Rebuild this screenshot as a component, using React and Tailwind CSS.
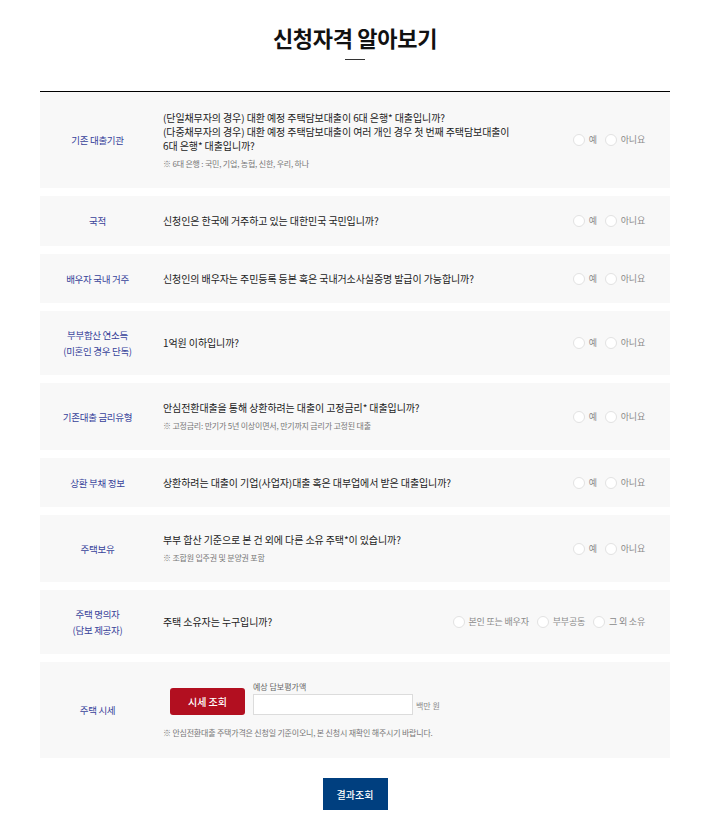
import { useState } from "react";

const FONT = { fontFamily: '"Noto Sans CJK KR", "Noto Sans", sans-serif' };

const ROWS = [
  {
    label: ["기존 대출기관"],
    lines: [
      "(단일채무자의 경우) 대환 예정 주택담보대출이 6대 은행* 대출입니까?",
      "(다중채무자의 경우) 대환 예정 주택담보대출이 여러 개인 경우 첫 번째 주택담보대출이",
      "6대 은행* 대출입니까?",
    ],
    note: "※ 6대 은행 : 국민, 기업, 농협, 신한, 우리, 하나",
    h: "h-[96px]",
  },
  { label: ["국적"], lines: ["신청인은 한국에 거주하고 있는 대한민국 국민입니까?"], h: "h-[50px]" },
  {
    label: ["배우자 국내 거주"],
    lines: ["신청인의 배우자는 주민등록 등본 혹은 국내거소사실증명 발급이 가능합니까?"],
    h: "h-[49px]",
  },
  { label: ["부부합산 연소득", "(미혼인 경우 단독)"], lines: ["1억원 이하입니까?"], h: "h-[64px]" },
  {
    label: ["기존대출 금리유형"],
    lines: ["안심전환대출을 통해 상환하려는 대출이 고정금리* 대출입니까?"],
    note: "※ 고정금리: 만기가 5년 이상이면서, 만기까지 금리가 고정된 대출",
    h: "h-[67px]",
  },
  {
    label: ["상환 부채 정보"],
    lines: ["상환하려는 대출이 기업(사업자)대출 혹은 대부업에서 받은 대출입니까?"],
    h: "h-[49px]",
  },
  {
    label: ["주택보유"],
    lines: ["부부 합산 기준으로 본 건 외에 다른 소유 주택*이 있습니까?"],
    note: "※ 조합원 입주권 및 분양권 포함",
    h: "h-[67px]",
  },
  {
    label: ["주택 명의자", "(담보 제공자)"],
    lines: ["주택 소유자는 누구입니까?"],
    options: ["본인 또는 배우자", "부부공동", "그 외 소유"],
    h: "h-[64px]",
  },
];

function Radio({ options, value, onChange }) {
  return (
    <div className="flex items-center gap-[8px] pr-[25px] shrink-0">
      {options.map((opt) => (
        <label key={opt} className="flex items-center gap-[4px] cursor-pointer">
          <span
            onClick={() => onChange(opt)}
            className="w-[12px] h-[12px] rounded-full border border-[#e2e2e2] bg-white flex items-center justify-center"
          >
            {value === opt && <span className="w-[5px] h-[5px] rounded-full bg-[#003f7f]" />}
          </span>
          <span className="text-[9px] text-[#8a8a8a] leading-[14px] tracking-[-0.2px]">{opt}</span>
        </label>
      ))}
    </div>
  );
}

export default function App() {
  const [answers, setAnswers] = useState({});
  const [price, setPrice] = useState("");

  return (
    <div className="min-h-screen bg-white text-[#222]" style={FONT}>
      <div className="w-[630px] ml-[40px]">
        <div className="flex flex-col items-center pt-[22px] pb-[31px]">
          <h2 className="text-[22px] font-bold leading-[30px] tracking-[-0.3px] text-[#111]">신청자격 알아보기</h2>
          <div className="w-[20px] h-px bg-[#333] mt-[7px]" />
        </div>

        <div className="border-t border-black flex flex-col gap-2">
          {ROWS.map((row, i) => (
            <div key={i} className={`flex items-center bg-[#f8f8f8] ${row.h}`}>
              <div className="w-[115px] shrink-0 text-center text-[9.5px] leading-[16px] tracking-[-0.3px] text-[#37429a]">
                {row.label.map((l) => (
                  <div key={l}>{l}</div>
                ))}
              </div>
              <div className="flex-1 pl-2">
                {row.lines.map((l) => (
                  <div key={l} className="text-[10px] leading-[14px] tracking-[-0.1px] text-[#222]">{l}</div>
                ))}
                {row.note && (
                  <div className="text-[8px] leading-[12px] text-[#777] mt-[5px] tracking-[-0.2px]">{row.note}</div>
                )}
              </div>
              <Radio
                options={row.options || ["예", "아니요"]}
                value={answers[i]}
                onChange={(v) => setAnswers({ ...answers, [i]: v })}
              />
            </div>
          ))}

          <div className="flex items-center bg-[#f8f8f8] h-[96px]">
            <div className="w-[115px] shrink-0 text-center text-[9.5px] leading-[16px] tracking-[-0.3px] text-[#37429a]">
              주택 시세
            </div>
            <div className="flex-1 pl-2">
              <div className="flex items-end pl-[7px]">
                <button className="w-[75px] h-[27px] rounded-[3px] bg-[#b20f20] text-white text-[10px] font-medium">
                  시세 조회
                </button>
                <div className="ml-[8px] flex flex-col">
                  <span className="text-[8px] leading-[12px] text-[#666] mb-[1px]">예상 담보평가액</span>
                  <div className="flex items-end">
                    <input
                      value={price}
                      onChange={(e) => setPrice(e.target.value)}
                      className="w-[160px] h-[21px] border border-[#dcdcdc] bg-white outline-none px-1 text-[10px]"
                    />
                    <span className="ml-[3px] text-[8px] leading-[14px] text-[#888] mb-[2px]">백만 원</span>
                  </div>
                </div>
              </div>
              <div className="text-[8px] leading-[12px] text-[#777] mt-[12px] tracking-[-0.2px]">
                ※ 안심전환대출 주택가격은 신청일 기준이오니, 본 신청시 재확인 해주시기 바랍니다.
              </div>
            </div>
          </div>
        </div>

        <div className="flex justify-center pt-[20px] pb-[19px]">
          <button className="w-[65px] h-[32px] bg-[#003f7f] text-white text-[10px] font-medium">결과조회</button>
        </div>
      </div>
    </div>
  );
}
